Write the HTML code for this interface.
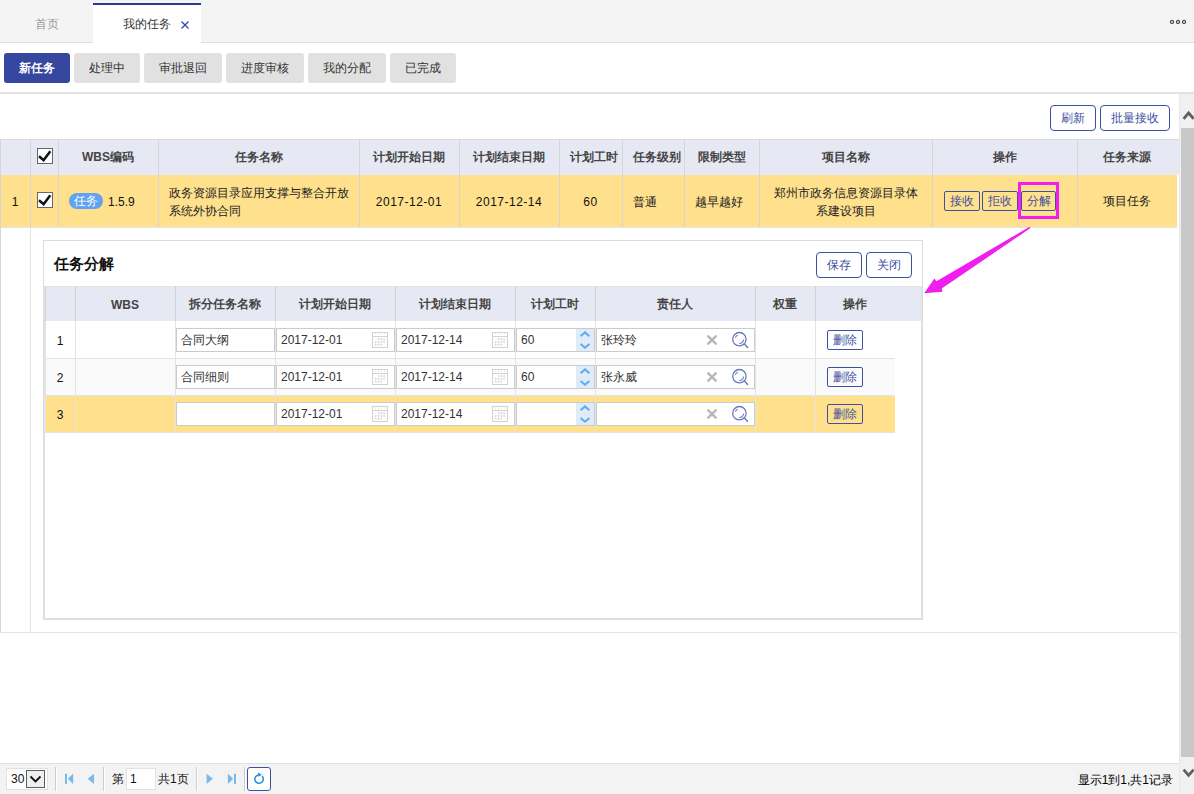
<!DOCTYPE html>
<html><head><meta charset="utf-8">
<style>
*{box-sizing:border-box;margin:0;padding:0}
html,body{width:1194px;height:794px;overflow:hidden;background:#fff;font-family:"Liberation Sans",sans-serif;font-size:12px;color:#333}
.ab{position:absolute}
.c{position:absolute;display:flex;align-items:center;justify-content:center;text-align:center;white-space:nowrap}
.btn{position:absolute;display:flex;align-items:center;justify-content:center;border-radius:3px;font-size:12px;white-space:nowrap;padding-top:1px}
.gbtn{background:#e1e1e1;color:#333}
.obtn{border:1px solid #3e50a2;color:#3e50a2;background:#fff;border-radius:4px}
.sbtn{border:1px solid #3e50a2;color:#3e50a2;border-radius:2px}
.hd{font-weight:bold;color:#444}
.vl{position:absolute;width:1px}
.hl{position:absolute;height:1px}
.inp{position:absolute;background:#fff;border:1px solid #cbcbcb;font-size:12px;color:#333;display:flex;align-items:center;padding-left:4px;white-space:nowrap}
</style></head><body>

<div class="ab" style="left:0;top:0;width:1194px;height:42px;background:#f4f4f4"></div>
<div class="hl" style="left:0;top:42px;width:1194px;background:#dedede"></div>
<div class="c" style="left:0;top:13px;width:93px;height:22px;color:#9a9a9a">首页</div>
<div class="ab" style="left:93px;top:3px;width:108px;height:41px;background:#fff;border-top:2px solid #2b3a94"></div>
<div class="ab" style="left:123px;top:16px;height:16px;line-height:16px;color:#333">我的任务</div>
<svg class="ab" style="left:180px;top:20px" width="10" height="10" viewBox="0 0 10 10"><path d="M1.5 1.5L8.5 8.5M8.5 1.5L1.5 8.5" stroke="#3446a0" stroke-width="1.25"/></svg>
<svg class="ab" style="left:1168px;top:18px" width="20" height="8" viewBox="0 0 20 8"><circle cx="4" cy="3.9" r="1.6" fill="#d0d0d0" stroke="#444" stroke-width="1.1"/><circle cx="10" cy="3.9" r="1.6" fill="#d0d0d0" stroke="#444" stroke-width="1.1"/><circle cx="16" cy="3.9" r="1.6" fill="#d0d0d0" stroke="#444" stroke-width="1.1"/></svg>
<div class="btn" style="left:4px;top:53px;width:66px;height:30px;background:#35479e;color:#fff;font-weight:bold">新任务</div>
<div class="btn gbtn" style="left:74px;top:53px;width:66px;height:30px">处理中</div>
<div class="btn gbtn" style="left:144px;top:53px;width:78px;height:30px">审批退回</div>
<div class="btn gbtn" style="left:226px;top:53px;width:78px;height:30px">进度审核</div>
<div class="btn gbtn" style="left:308px;top:53px;width:78px;height:30px">我的分配</div>
<div class="btn gbtn" style="left:390px;top:53px;width:66px;height:30px">已完成</div>
<div class="ab" style="left:0;top:92px;width:1194px;height:2px;background:#e2e2e2"></div>
<div class="ab" style="left:1179px;top:94px;width:15px;height:700px;background:#f0f0f0;border-left:1px solid #e8e8e8"></div>
<div class="ab" style="left:1181px;top:128px;width:13px;height:629px;background:#c8c8c8"></div>
<svg class="ab" style="left:1181px;top:108px" width="13" height="14" viewBox="0 0 13 14"><path d="M2.6 10.8L7.6 5L12.6 10.8" fill="none" stroke="#606060" stroke-width="2.8"/></svg>
<svg class="ab" style="left:1181px;top:765px" width="13" height="14" viewBox="0 0 13 14"><path d="M2.6 4.6L7.6 10.4L12.6 4.6" fill="none" stroke="#606060" stroke-width="2.8"/></svg>
<div class="btn obtn" style="left:1050px;top:105px;width:46px;height:26px">刷新</div>
<div class="btn obtn" style="left:1100px;top:105px;width:70px;height:26px">批量接收</div>
<div class="ab" style="left:0;top:139px;width:1179px;height:36px;background:#e6e9f3"></div>
<div class="ab" style="left:0;top:175px;width:1177px;height:52px;background:#fee08d"></div>
<div class="hl" style="left:0;top:139px;width:1179px;background:#dcdcdc"></div>
<div class="hl" style="left:0;top:227px;width:1177px;background:#e3e3e3"></div>
<div class="vl" style="left:30px;top:139px;height:88px;background:#d6d6d6"></div>
<div class="vl" style="left:58px;top:139px;height:88px;background:#d6d6d6"></div>
<div class="vl" style="left:158px;top:139px;height:88px;background:#d6d6d6"></div>
<div class="vl" style="left:359px;top:139px;height:88px;background:#d6d6d6"></div>
<div class="vl" style="left:459px;top:139px;height:88px;background:#d6d6d6"></div>
<div class="vl" style="left:559px;top:139px;height:88px;background:#d6d6d6"></div>
<div class="vl" style="left:622px;top:139px;height:88px;background:#d6d6d6"></div>
<div class="vl" style="left:684px;top:139px;height:88px;background:#d6d6d6"></div>
<div class="vl" style="left:759px;top:139px;height:88px;background:#d6d6d6"></div>
<div class="vl" style="left:932px;top:139px;height:88px;background:#d6d6d6"></div>
<div class="vl" style="left:1077px;top:139px;height:88px;background:#d6d6d6"></div>
<div class="vl" style="left:0;top:139px;height:493px;background:#d6d6d6"></div>
<div class="vl" style="left:30px;top:227px;height:405px;background:#e3e3e3"></div>
<div class="hl" style="left:0;top:632px;width:1177px;background:#e3e3e3"></div>
<div class="c hd" style="left:58px;top:139px;width:100px;height:36px;padding-top:1px">WBS编码</div>
<div class="c hd" style="left:158px;top:139px;width:201px;height:36px;padding-top:1px">任务名称</div>
<div class="c hd" style="left:359px;top:139px;width:100px;height:36px;padding-top:1px">计划开始日期</div>
<div class="c hd" style="left:459px;top:139px;width:100px;height:36px;padding-top:1px">计划结束日期</div>
<div class="c hd" style="left:559px;top:139px;width:63px;height:36px;padding-top:1px;justify-content:flex-start;padding-left:11px">计划工时</div>
<div class="c hd" style="left:622px;top:139px;width:62px;height:36px;padding-top:1px;justify-content:flex-start;padding-left:11px">任务级别</div>
<div class="c hd" style="left:684px;top:139px;width:75px;height:36px;padding-top:1px">限制类型</div>
<div class="c hd" style="left:759px;top:139px;width:173px;height:36px;padding-top:1px">项目名称</div>
<div class="c hd" style="left:932px;top:139px;width:145px;height:36px;padding-top:1px">操作</div>
<div class="c hd" style="left:1077px;top:139px;width:100px;height:36px;padding-top:1px">任务来源</div>
<svg class="ab" style="left:37px;top:148px" width="16" height="16" viewBox="0 0 16 16"><rect x="0.5" y="0.5" width="15" height="15" fill="#fff" stroke="#666"/><path d="M2 8.3L6.6 12.2L13.3 3.3" fill="none" stroke="#111" stroke-width="2.5"/></svg>
<svg class="ab" style="left:37px;top:192px" width="16" height="16" viewBox="0 0 16 16"><rect x="0.5" y="0.5" width="15" height="15" fill="#fff" stroke="#666"/><path d="M2 8.3L6.6 12.2L13.3 3.3" fill="none" stroke="#111" stroke-width="2.5"/></svg>
<div class="c" style="left:0;top:176px;width:30px;height:52px;color:#111">1</div>
<div class="c" style="left:69px;top:193px;width:34px;height:16px;background:#60a3f0;color:#fff;border-radius:8px;padding-top:1px">任务</div>
<div class="ab" style="left:108px;top:194px;height:16px;line-height:16px;color:#111;font-size:12px">1.5.9</div>
<div class="ab" style="left:169px;top:184px;width:190px;line-height:18px;color:#222">政务资源目录应用支撑与整合开放<br>系统外协合同</div>
<div class="c" style="left:359px;top:176px;width:100px;height:52px;color:#111;letter-spacing:0.5px">2017-12-01</div>
<div class="c" style="left:459px;top:176px;width:100px;height:52px;color:#111;letter-spacing:0.5px">2017-12-14</div>
<div class="c" style="left:559px;top:176px;width:63px;height:52px;color:#111;letter-spacing:0.5px">60</div>
<div class="c" style="left:633px;top:176px;height:52px;color:#222">普通</div>
<div class="c" style="left:695px;top:176px;height:52px;color:#222">越早越好</div>
<div class="c" style="left:759px;top:175px;width:173px;height:52px;line-height:18px;white-space:normal;color:#222;padding-top:2px">郑州市政务信息资源目录体<br>系建设项目</div>
<div class="c" style="left:1077px;top:175px;width:100px;height:52px;color:#222;padding-top:1px">项目任务</div>
<div class="btn sbtn" style="left:944px;top:191px;width:36px;height:20px">接收</div>
<div class="btn sbtn" style="left:982px;top:191px;width:36px;height:20px">拒收</div>
<div class="btn sbtn" style="left:1021px;top:191px;width:35px;height:20px">分解</div>
<div class="ab" style="left:1018px;top:182px;width:41px;height:37px;border:3px solid #f01ef0"></div>
<div class="ab" style="left:43px;top:240px;width:880px;height:380px;border:1px solid #dcdcdc;background:#fff"></div>
<div class="ab" style="left:44px;top:286px;width:878px;height:333px;border:1px solid #e2e2e2"></div>
<div class="ab" style="left:54px;top:254px;font-size:15px;font-weight:bold;color:#111;line-height:20px">任务分解</div>
<div class="btn obtn" style="left:816px;top:252px;width:46px;height:26px">保存</div>
<div class="btn obtn" style="left:866px;top:252px;width:46px;height:26px">关闭</div>
<div class="ab" style="left:45px;top:287px;width:876px;height:34px;background:#e6e9f3"></div>
<div class="vl" style="left:45px;top:286px;height:35px;background:#d2d2d2"></div>
<div class="vl" style="left:75px;top:286px;height:35px;background:#d2d2d2"></div>
<div class="vl" style="left:175px;top:286px;height:35px;background:#d2d2d2"></div>
<div class="vl" style="left:275px;top:286px;height:35px;background:#d2d2d2"></div>
<div class="vl" style="left:395px;top:286px;height:35px;background:#d2d2d2"></div>
<div class="vl" style="left:515px;top:286px;height:35px;background:#d2d2d2"></div>
<div class="vl" style="left:595px;top:286px;height:35px;background:#d2d2d2"></div>
<div class="vl" style="left:755px;top:286px;height:35px;background:#d2d2d2"></div>
<div class="vl" style="left:815px;top:286px;height:35px;background:#d2d2d2"></div>
<div class="c hd" style="left:75px;top:287px;width:100px;height:35px">WBS</div>
<div class="c hd" style="left:175px;top:287px;width:100px;height:35px">拆分任务名称</div>
<div class="c hd" style="left:275px;top:287px;width:120px;height:35px">计划开始日期</div>
<div class="c hd" style="left:395px;top:287px;width:120px;height:35px">计划结束日期</div>
<div class="c hd" style="left:515px;top:287px;width:80px;height:35px">计划工时</div>
<div class="c hd" style="left:595px;top:287px;width:160px;height:35px">责任人</div>
<div class="c hd" style="left:755px;top:287px;width:60px;height:35px">权重</div>
<div class="c hd" style="left:815px;top:287px;width:80px;height:35px">操作</div>
<div class="ab" style="left:45px;top:321px;width:850px;height:37px;background:#fff"></div>
<div class="ab" style="left:45px;top:358px;width:850px;height:37px;background:#fafafa"></div>
<div class="ab" style="left:45px;top:395px;width:850px;height:37px;background:#fee08d"></div>
<div class="hl" style="left:45px;top:358px;width:850px;background:#e4e4e4"></div>
<div class="vl" style="left:45px;top:321px;height:37px;background:#e4e4e4"></div>
<div class="vl" style="left:75px;top:321px;height:37px;background:#e4e4e4"></div>
<div class="vl" style="left:175px;top:321px;height:37px;background:#e4e4e4"></div>
<div class="vl" style="left:275px;top:321px;height:37px;background:#e4e4e4"></div>
<div class="vl" style="left:395px;top:321px;height:37px;background:#e4e4e4"></div>
<div class="vl" style="left:515px;top:321px;height:37px;background:#e4e4e4"></div>
<div class="vl" style="left:595px;top:321px;height:37px;background:#e4e4e4"></div>
<div class="vl" style="left:755px;top:321px;height:37px;background:#e4e4e4"></div>
<div class="vl" style="left:815px;top:321px;height:37px;background:#e4e4e4"></div>
<div class="hl" style="left:45px;top:395px;width:850px;background:#e4e4e4"></div>
<div class="vl" style="left:45px;top:358px;height:37px;background:#e4e4e4"></div>
<div class="vl" style="left:75px;top:358px;height:37px;background:#e4e4e4"></div>
<div class="vl" style="left:175px;top:358px;height:37px;background:#e4e4e4"></div>
<div class="vl" style="left:275px;top:358px;height:37px;background:#e4e4e4"></div>
<div class="vl" style="left:395px;top:358px;height:37px;background:#e4e4e4"></div>
<div class="vl" style="left:515px;top:358px;height:37px;background:#e4e4e4"></div>
<div class="vl" style="left:595px;top:358px;height:37px;background:#e4e4e4"></div>
<div class="vl" style="left:755px;top:358px;height:37px;background:#e4e4e4"></div>
<div class="vl" style="left:815px;top:358px;height:37px;background:#e4e4e4"></div>
<div class="hl" style="left:45px;top:432px;width:850px;background:#e4e4e4"></div>
<div class="vl" style="left:45px;top:395px;height:37px;background:#e4e4e4"></div>
<div class="vl" style="left:75px;top:395px;height:37px;background:#e4e4e4"></div>
<div class="vl" style="left:175px;top:395px;height:37px;background:#e4e4e4"></div>
<div class="vl" style="left:275px;top:395px;height:37px;background:#e4e4e4"></div>
<div class="vl" style="left:395px;top:395px;height:37px;background:#e4e4e4"></div>
<div class="vl" style="left:515px;top:395px;height:37px;background:#e4e4e4"></div>
<div class="vl" style="left:595px;top:395px;height:37px;background:#e4e4e4"></div>
<div class="vl" style="left:755px;top:395px;height:37px;background:#e4e4e4"></div>
<div class="vl" style="left:815px;top:395px;height:37px;background:#e4e4e4"></div>
<div class="c" style="left:45px;top:322px;width:30px;height:37px;color:#111">1</div>
<div class="inp" style="left:176px;top:328px;width:99px;height:24px">合同大纲</div>
<div class="inp" style="left:276px;top:328px;width:119px;height:24px">2017-12-01</div>
<svg class="ab" style="left:372px;top:332px" width="16" height="16" viewBox="0 0 16 16"><rect x="0.5" y="0.5" width="15" height="15" fill="none" stroke="#d2d2d2"/><path d="M0.5 4.5H15.5" stroke="#d2d2d2"/><path d="M3.5 1.5V2.5M6.5 1.5V2.5M9.5 1.5V2.5M12.5 1.5V2.5" stroke="#dcdcdc"/><path d="M5.4 7h2.2M6.5 5.9v2.2" stroke="#d9d9d9" stroke-width="0.9"/><path d="M8.200000000000001 7h2.2M9.3 5.9v2.2" stroke="#d9d9d9" stroke-width="0.9"/><path d="M11.0 7h2.2M12.1 5.9v2.2" stroke="#d9d9d9" stroke-width="0.9"/><path d="M2.6 9.9h2.2M3.7 8.8v2.2" stroke="#d9d9d9" stroke-width="0.9"/><path d="M5.4 9.9h2.2M6.5 8.8v2.2" stroke="#d9d9d9" stroke-width="0.9"/><path d="M8.200000000000001 9.9h2.2M9.3 8.8v2.2" stroke="#d9d9d9" stroke-width="0.9"/><path d="M11.0 9.9h2.2M12.1 8.8v2.2" stroke="#d9d9d9" stroke-width="0.9"/><path d="M2.6 12.7h2.2M3.7 11.6v2.2" stroke="#d9d9d9" stroke-width="0.9"/><path d="M5.4 12.7h2.2M6.5 11.6v2.2" stroke="#d9d9d9" stroke-width="0.9"/><path d="M8.200000000000001 12.7h2.2M9.3 11.6v2.2" stroke="#d9d9d9" stroke-width="0.9"/></svg>
<div class="inp" style="left:396px;top:328px;width:119px;height:24px">2017-12-14</div>
<svg class="ab" style="left:492px;top:332px" width="16" height="16" viewBox="0 0 16 16"><rect x="0.5" y="0.5" width="15" height="15" fill="none" stroke="#d2d2d2"/><path d="M0.5 4.5H15.5" stroke="#d2d2d2"/><path d="M3.5 1.5V2.5M6.5 1.5V2.5M9.5 1.5V2.5M12.5 1.5V2.5" stroke="#dcdcdc"/><path d="M5.4 7h2.2M6.5 5.9v2.2" stroke="#d9d9d9" stroke-width="0.9"/><path d="M8.200000000000001 7h2.2M9.3 5.9v2.2" stroke="#d9d9d9" stroke-width="0.9"/><path d="M11.0 7h2.2M12.1 5.9v2.2" stroke="#d9d9d9" stroke-width="0.9"/><path d="M2.6 9.9h2.2M3.7 8.8v2.2" stroke="#d9d9d9" stroke-width="0.9"/><path d="M5.4 9.9h2.2M6.5 8.8v2.2" stroke="#d9d9d9" stroke-width="0.9"/><path d="M8.200000000000001 9.9h2.2M9.3 8.8v2.2" stroke="#d9d9d9" stroke-width="0.9"/><path d="M11.0 9.9h2.2M12.1 8.8v2.2" stroke="#d9d9d9" stroke-width="0.9"/><path d="M2.6 12.7h2.2M3.7 11.6v2.2" stroke="#d9d9d9" stroke-width="0.9"/><path d="M5.4 12.7h2.2M6.5 11.6v2.2" stroke="#d9d9d9" stroke-width="0.9"/><path d="M8.200000000000001 12.7h2.2M9.3 11.6v2.2" stroke="#d9d9d9" stroke-width="0.9"/></svg>
<div class="inp" style="left:516px;top:328px;width:79px;height:24px">60</div>
<div class="ab" style="left:576px;top:329px;width:18px;height:22px;background:#e0ebfa"></div>
<svg class="ab" style="left:579px;top:331px" width="12" height="19" viewBox="0 0 12 19"><path d="M1.6 5.2L6 1.4L10.4 5.2M1.6 13L6 16.8L10.4 13" fill="none" stroke="#5eacef" stroke-width="2"/></svg>
<div class="inp" style="left:596px;top:328px;width:159px;height:24px">张玲玲</div>
<svg class="ab" style="left:706px;top:334px" width="12" height="12" viewBox="0 0 12 12"><path d="M2.3 2.3L9.7 9.7M9.7 2.3L2.3 9.7" stroke="#b8b8b8" stroke-width="2.5" stroke-linecap="round"/></svg>
<svg class="ab" style="left:731px;top:331px" width="18" height="18" viewBox="0 0 18 18"><circle cx="8.4" cy="8.2" r="6.7" fill="none" stroke="#6b79b9" stroke-width="1.3"/><path d="M4.3 6.6A4.3 4.3 0 0 1 6.8 4.3" fill="none" stroke="#6b79b9" stroke-width="1.1"/><path d="M12.6 8.4A4.2 4.2 0 0 1 8.2 12.5" fill="none" stroke="#6b79b9" stroke-width="1.1"/><path d="M13.2 12.8L16.6 16.4" stroke="#6b79b9" stroke-width="1.4" stroke-linecap="round"/></svg>
<div class="btn sbtn" style="left:827px;top:330px;width:36px;height:20px">删除</div>
<div class="c" style="left:45px;top:359px;width:30px;height:37px;color:#111">2</div>
<div class="inp" style="left:176px;top:365px;width:99px;height:24px">合同细则</div>
<div class="inp" style="left:276px;top:365px;width:119px;height:24px">2017-12-01</div>
<svg class="ab" style="left:372px;top:369px" width="16" height="16" viewBox="0 0 16 16"><rect x="0.5" y="0.5" width="15" height="15" fill="none" stroke="#d2d2d2"/><path d="M0.5 4.5H15.5" stroke="#d2d2d2"/><path d="M3.5 1.5V2.5M6.5 1.5V2.5M9.5 1.5V2.5M12.5 1.5V2.5" stroke="#dcdcdc"/><path d="M5.4 7h2.2M6.5 5.9v2.2" stroke="#d9d9d9" stroke-width="0.9"/><path d="M8.200000000000001 7h2.2M9.3 5.9v2.2" stroke="#d9d9d9" stroke-width="0.9"/><path d="M11.0 7h2.2M12.1 5.9v2.2" stroke="#d9d9d9" stroke-width="0.9"/><path d="M2.6 9.9h2.2M3.7 8.8v2.2" stroke="#d9d9d9" stroke-width="0.9"/><path d="M5.4 9.9h2.2M6.5 8.8v2.2" stroke="#d9d9d9" stroke-width="0.9"/><path d="M8.200000000000001 9.9h2.2M9.3 8.8v2.2" stroke="#d9d9d9" stroke-width="0.9"/><path d="M11.0 9.9h2.2M12.1 8.8v2.2" stroke="#d9d9d9" stroke-width="0.9"/><path d="M2.6 12.7h2.2M3.7 11.6v2.2" stroke="#d9d9d9" stroke-width="0.9"/><path d="M5.4 12.7h2.2M6.5 11.6v2.2" stroke="#d9d9d9" stroke-width="0.9"/><path d="M8.200000000000001 12.7h2.2M9.3 11.6v2.2" stroke="#d9d9d9" stroke-width="0.9"/></svg>
<div class="inp" style="left:396px;top:365px;width:119px;height:24px">2017-12-14</div>
<svg class="ab" style="left:492px;top:369px" width="16" height="16" viewBox="0 0 16 16"><rect x="0.5" y="0.5" width="15" height="15" fill="none" stroke="#d2d2d2"/><path d="M0.5 4.5H15.5" stroke="#d2d2d2"/><path d="M3.5 1.5V2.5M6.5 1.5V2.5M9.5 1.5V2.5M12.5 1.5V2.5" stroke="#dcdcdc"/><path d="M5.4 7h2.2M6.5 5.9v2.2" stroke="#d9d9d9" stroke-width="0.9"/><path d="M8.200000000000001 7h2.2M9.3 5.9v2.2" stroke="#d9d9d9" stroke-width="0.9"/><path d="M11.0 7h2.2M12.1 5.9v2.2" stroke="#d9d9d9" stroke-width="0.9"/><path d="M2.6 9.9h2.2M3.7 8.8v2.2" stroke="#d9d9d9" stroke-width="0.9"/><path d="M5.4 9.9h2.2M6.5 8.8v2.2" stroke="#d9d9d9" stroke-width="0.9"/><path d="M8.200000000000001 9.9h2.2M9.3 8.8v2.2" stroke="#d9d9d9" stroke-width="0.9"/><path d="M11.0 9.9h2.2M12.1 8.8v2.2" stroke="#d9d9d9" stroke-width="0.9"/><path d="M2.6 12.7h2.2M3.7 11.6v2.2" stroke="#d9d9d9" stroke-width="0.9"/><path d="M5.4 12.7h2.2M6.5 11.6v2.2" stroke="#d9d9d9" stroke-width="0.9"/><path d="M8.200000000000001 12.7h2.2M9.3 11.6v2.2" stroke="#d9d9d9" stroke-width="0.9"/></svg>
<div class="inp" style="left:516px;top:365px;width:79px;height:24px">60</div>
<div class="ab" style="left:576px;top:366px;width:18px;height:22px;background:#e0ebfa"></div>
<svg class="ab" style="left:579px;top:368px" width="12" height="19" viewBox="0 0 12 19"><path d="M1.6 5.2L6 1.4L10.4 5.2M1.6 13L6 16.8L10.4 13" fill="none" stroke="#5eacef" stroke-width="2"/></svg>
<div class="inp" style="left:596px;top:365px;width:159px;height:24px">张永威</div>
<svg class="ab" style="left:706px;top:371px" width="12" height="12" viewBox="0 0 12 12"><path d="M2.3 2.3L9.7 9.7M9.7 2.3L2.3 9.7" stroke="#b8b8b8" stroke-width="2.5" stroke-linecap="round"/></svg>
<svg class="ab" style="left:731px;top:368px" width="18" height="18" viewBox="0 0 18 18"><circle cx="8.4" cy="8.2" r="6.7" fill="none" stroke="#6b79b9" stroke-width="1.3"/><path d="M4.3 6.6A4.3 4.3 0 0 1 6.8 4.3" fill="none" stroke="#6b79b9" stroke-width="1.1"/><path d="M12.6 8.4A4.2 4.2 0 0 1 8.2 12.5" fill="none" stroke="#6b79b9" stroke-width="1.1"/><path d="M13.2 12.8L16.6 16.4" stroke="#6b79b9" stroke-width="1.4" stroke-linecap="round"/></svg>
<div class="btn sbtn" style="left:827px;top:367px;width:36px;height:20px">删除</div>
<div class="c" style="left:45px;top:396px;width:30px;height:37px;color:#111">3</div>
<div class="inp" style="left:176px;top:402px;width:99px;height:24px"></div>
<div class="inp" style="left:276px;top:402px;width:119px;height:24px">2017-12-01</div>
<svg class="ab" style="left:372px;top:406px" width="16" height="16" viewBox="0 0 16 16"><rect x="0.5" y="0.5" width="15" height="15" fill="none" stroke="#d2d2d2"/><path d="M0.5 4.5H15.5" stroke="#d2d2d2"/><path d="M3.5 1.5V2.5M6.5 1.5V2.5M9.5 1.5V2.5M12.5 1.5V2.5" stroke="#dcdcdc"/><path d="M5.4 7h2.2M6.5 5.9v2.2" stroke="#d9d9d9" stroke-width="0.9"/><path d="M8.200000000000001 7h2.2M9.3 5.9v2.2" stroke="#d9d9d9" stroke-width="0.9"/><path d="M11.0 7h2.2M12.1 5.9v2.2" stroke="#d9d9d9" stroke-width="0.9"/><path d="M2.6 9.9h2.2M3.7 8.8v2.2" stroke="#d9d9d9" stroke-width="0.9"/><path d="M5.4 9.9h2.2M6.5 8.8v2.2" stroke="#d9d9d9" stroke-width="0.9"/><path d="M8.200000000000001 9.9h2.2M9.3 8.8v2.2" stroke="#d9d9d9" stroke-width="0.9"/><path d="M11.0 9.9h2.2M12.1 8.8v2.2" stroke="#d9d9d9" stroke-width="0.9"/><path d="M2.6 12.7h2.2M3.7 11.6v2.2" stroke="#d9d9d9" stroke-width="0.9"/><path d="M5.4 12.7h2.2M6.5 11.6v2.2" stroke="#d9d9d9" stroke-width="0.9"/><path d="M8.200000000000001 12.7h2.2M9.3 11.6v2.2" stroke="#d9d9d9" stroke-width="0.9"/></svg>
<div class="inp" style="left:396px;top:402px;width:119px;height:24px">2017-12-14</div>
<svg class="ab" style="left:492px;top:406px" width="16" height="16" viewBox="0 0 16 16"><rect x="0.5" y="0.5" width="15" height="15" fill="none" stroke="#d2d2d2"/><path d="M0.5 4.5H15.5" stroke="#d2d2d2"/><path d="M3.5 1.5V2.5M6.5 1.5V2.5M9.5 1.5V2.5M12.5 1.5V2.5" stroke="#dcdcdc"/><path d="M5.4 7h2.2M6.5 5.9v2.2" stroke="#d9d9d9" stroke-width="0.9"/><path d="M8.200000000000001 7h2.2M9.3 5.9v2.2" stroke="#d9d9d9" stroke-width="0.9"/><path d="M11.0 7h2.2M12.1 5.9v2.2" stroke="#d9d9d9" stroke-width="0.9"/><path d="M2.6 9.9h2.2M3.7 8.8v2.2" stroke="#d9d9d9" stroke-width="0.9"/><path d="M5.4 9.9h2.2M6.5 8.8v2.2" stroke="#d9d9d9" stroke-width="0.9"/><path d="M8.200000000000001 9.9h2.2M9.3 8.8v2.2" stroke="#d9d9d9" stroke-width="0.9"/><path d="M11.0 9.9h2.2M12.1 8.8v2.2" stroke="#d9d9d9" stroke-width="0.9"/><path d="M2.6 12.7h2.2M3.7 11.6v2.2" stroke="#d9d9d9" stroke-width="0.9"/><path d="M5.4 12.7h2.2M6.5 11.6v2.2" stroke="#d9d9d9" stroke-width="0.9"/><path d="M8.200000000000001 12.7h2.2M9.3 11.6v2.2" stroke="#d9d9d9" stroke-width="0.9"/></svg>
<div class="inp" style="left:516px;top:402px;width:79px;height:24px"></div>
<div class="ab" style="left:576px;top:403px;width:18px;height:22px;background:#e0ebfa"></div>
<svg class="ab" style="left:579px;top:405px" width="12" height="19" viewBox="0 0 12 19"><path d="M1.6 5.2L6 1.4L10.4 5.2M1.6 13L6 16.8L10.4 13" fill="none" stroke="#5eacef" stroke-width="2"/></svg>
<div class="inp" style="left:596px;top:402px;width:159px;height:24px"></div>
<svg class="ab" style="left:706px;top:408px" width="12" height="12" viewBox="0 0 12 12"><path d="M2.3 2.3L9.7 9.7M9.7 2.3L2.3 9.7" stroke="#b8b8b8" stroke-width="2.5" stroke-linecap="round"/></svg>
<svg class="ab" style="left:731px;top:405px" width="18" height="18" viewBox="0 0 18 18"><circle cx="8.4" cy="8.2" r="6.7" fill="none" stroke="#6b79b9" stroke-width="1.3"/><path d="M4.3 6.6A4.3 4.3 0 0 1 6.8 4.3" fill="none" stroke="#6b79b9" stroke-width="1.1"/><path d="M12.6 8.4A4.2 4.2 0 0 1 8.2 12.5" fill="none" stroke="#6b79b9" stroke-width="1.1"/><path d="M13.2 12.8L16.6 16.4" stroke="#6b79b9" stroke-width="1.4" stroke-linecap="round"/></svg>
<div class="btn sbtn" style="left:827px;top:404px;width:36px;height:20px">删除</div>
<svg class="ab" style="left:0;top:0" width="1194" height="794" viewBox="0 0 1194 794"><path d="M1029 227L936.5 281.3L934.4 278.6L924.2 293.3L942.7 291.7L941.7 288.6L1030.5 228Z" fill="#f01ef0"/></svg>
<div class="ab" style="left:0;top:763px;width:1179px;height:31px;background:#f3f3f3;border-top:1px solid #e0e0e0"></div>
<div class="ab" style="left:6px;top:768px;width:42px;height:22px;background:#fff;border:1px solid #e2e2e2"></div>
<div class="ab" style="left:11px;top:770px;line-height:18px;color:#111">30</div>
<div class="ab" style="left:26px;top:770px;width:19px;height:18px;background:#efefef;border:1px solid #5c5c5c"></div>
<svg class="ab" style="left:27px;top:771px" width="17" height="16" viewBox="0 0 17 16"><path d="M3.5 5.5L8.5 10.5L13.5 5.5" fill="none" stroke="#111" stroke-width="1.8"/></svg>
<div class="vl" style="left:55px;top:767px;height:24px;background:#cdcdcd"></div>
<div class="vl" style="left:56px;top:767px;height:24px;background:#fff"></div>
<div class="vl" style="left:103px;top:767px;height:24px;background:#cdcdcd"></div>
<div class="vl" style="left:104px;top:767px;height:24px;background:#fff"></div>
<div class="vl" style="left:196px;top:767px;height:24px;background:#cdcdcd"></div>
<div class="vl" style="left:197px;top:767px;height:24px;background:#fff"></div>
<div class="vl" style="left:244px;top:767px;height:24px;background:#cdcdcd"></div>
<div class="vl" style="left:245px;top:767px;height:24px;background:#fff"></div>
<svg class="ab" style="left:64px;top:773px" width="10" height="12" viewBox="0 0 10 12"><rect x="1" y="0.8" width="2" height="10.1" fill="#78b9ec"/><path d="M9.1 0.8V10.9L3.8 5.85Z" fill="#78b9ec"/></svg>
<svg class="ab" style="left:87px;top:773px" width="8" height="12" viewBox="0 0 8 12"><path d="M7 0.8V10.9L0.7 5.85Z" fill="#78b9ec"/></svg>
<div class="ab" style="left:112px;top:770px;line-height:18px;color:#111">第</div>
<div class="ab" style="left:126px;top:768px;width:30px;height:22px;background:#fff;border:1px solid #e2e2e2;padding-left:3px;line-height:20px;color:#111">1</div>
<div class="ab" style="left:158px;top:770px;line-height:18px;color:#111">共1页</div>
<svg class="ab" style="left:206px;top:773px" width="8" height="12" viewBox="0 0 8 12"><path d="M0.6 0.8V10.9L6.9 5.85Z" fill="#78b9ec"/></svg>
<svg class="ab" style="left:227px;top:773px" width="10" height="12" viewBox="0 0 10 12"><path d="M0.9 0.8V10.9L6.2 5.85Z" fill="#78b9ec"/><rect x="7" y="0.8" width="2" height="10.1" fill="#78b9ec"/></svg>
<div class="ab" style="left:247px;top:767px;width:24px;height:24px;border:1px solid #3e50a2;border-radius:3px;background:#fff"></div>
<svg class="ab" style="left:251px;top:771px" width="16" height="16" viewBox="0 0 16 16"><path d="M11.07 5.13A4.2 4.2 0 1 1 7.6 3.9" fill="none" stroke="#1d8fe6" stroke-width="1.5"/><path d="M7 1.6L10.9 3.8L7.3 5.8Z" fill="#1d8fe6"/></svg>
<div class="ab" style="right:21px;top:771px;line-height:18px;color:#000">显示1到1,共1记录</div>
</body></html>
